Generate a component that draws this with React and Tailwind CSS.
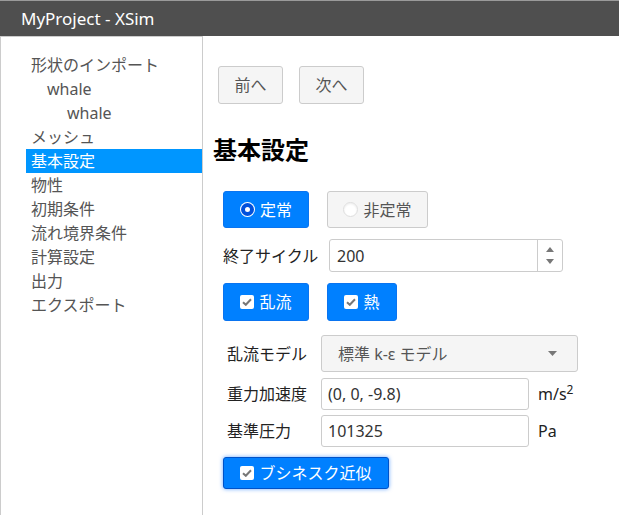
import React from "react";

const FONT = { fontFamily: '"Noto Sans", "Noto Sans CJK JP", sans-serif' };

function CheckIcon() {
  return (
    <span className="flex h-[14px] w-[14px] items-center justify-center rounded-[2px] bg-white">
      <svg width="10" height="8" viewBox="0 0 10 8">
        <path d="M1 4.2 L3.8 6.8 L9 1.2" fill="none" stroke="#777" strokeWidth="2" />
      </svg>
    </span>
  );
}

function RadioOn() {
  return (
    <span className="flex h-[15px] w-[15px] items-center justify-center rounded-full bg-white">
      <span className="h-[13px] w-[13px] rounded-full border-[4px] border-[#0050dc] bg-white" />
    </span>
  );
}

function RadioOff() {
  return <span className="h-[15px] w-[15px] rounded-full border border-[#dedede] bg-white shadow-[inset_0_1px_2px_rgba(0,0,0,0.08)]" />;
}

const sideItems = [
  { t: "形状のインポート", pl: "pl-[5px]" },
  { t: "whale", pl: "pl-[21px]" },
  { t: "whale", pl: "pl-[41px]" },
  { t: "メッシュ", pl: "pl-[5px]" },
  { t: "基本設定", pl: "pl-[5px]", active: true },
  { t: "物性", pl: "pl-[5px]" },
  { t: "初期条件", pl: "pl-[5px]" },
  { t: "流れ境界条件", pl: "pl-[5px]" },
  { t: "計算設定", pl: "pl-[5px]" },
  { t: "出力", pl: "pl-[5px]" },
  { t: "エクスポート", pl: "pl-[5px]" },
];

export default function App() {
  return (
    <div className="flex h-[515px] w-[619px] flex-col overflow-hidden bg-white" style={FONT}>
      <div className="flex h-9 shrink-0 items-center border-t border-[#9a9a9a] bg-[#4f4f4f] pl-[21px] text-[17px] text-white">
        MyProject - XSim
      </div>
      <div className="flex flex-1">
        <div className="w-[203px] shrink-0 border-x border-t border-[#cccccc] pt-[16px]">
          <ul className="ml-[25px]">
            {sideItems.map((it, i) => (
              <li
                key={i}
                className={`h-6 text-[16px] leading-6 ${it.pl} ${
                  it.active ? "bg-[#0096ff] text-white" : "text-[#555555]"
                }`}
              >
                {it.t}
              </li>
            ))}
          </ul>
        </div>
        <div className="flex flex-1 flex-col">
          <div className="ml-[15px] mt-[30px] flex gap-4">
            <button className="h-[38px] w-[65px] rounded-[3px] border border-[#cccccc] bg-[#f5f5f5] text-[16px] text-[#555555]">
              前へ
            </button>
            <button className="h-[38px] w-[65px] rounded-[3px] border border-[#cccccc] bg-[#f5f5f5] text-[16px] text-[#555555]">
              次へ
            </button>
          </div>
          <h2 className="ml-[10px] mt-[30px] h-8 text-[24px] font-bold leading-8 text-black">基本設定</h2>

          <div className="ml-[20px] mt-[25px] flex gap-[18px]">
            <button className="flex h-[37px] w-[86px] items-center justify-center gap-[5px] rounded-[3px] border border-[#0a74f0] bg-[#0080ff] text-[16px] text-white">
              <RadioOn />
              定常
            </button>
            <button className="flex h-[37px] w-[101px] items-center justify-center gap-[5px] rounded-[3px] border border-[#cccccc] bg-[#f5f5f5] text-[16px] text-[#555555]">
              <RadioOff />
              非定常
            </button>
          </div>

          <div className="ml-[20px] mt-[11px] flex items-center">
            <span className="w-[106px] text-[16px] text-[#222222]">終了サイクル</span>
            <div className="flex h-[33px] w-[234px] rounded-[3px] border border-[#cccccc]">
              <span className="flex flex-1 items-center pl-[7px] text-[16px] text-[#333333]">200</span>
              <div className="flex w-[25px] flex-col items-center justify-center gap-[7px] border-l border-[#cccccc]">
                <svg width="8" height="5" viewBox="0 0 8 5"><path d="M0 5 L4 0 L8 5 Z" fill="#777" /></svg>
                <svg width="8" height="5" viewBox="0 0 8 5"><path d="M0 0 L4 5 L8 0 Z" fill="#777" /></svg>
              </div>
            </div>
          </div>

          <div className="ml-[20px] mt-[11px] flex gap-[18px]">
            <button className="flex h-[38px] w-[86px] items-center justify-center gap-[5px] rounded-[3px] border border-[#0a74f0] bg-[#0080ff] text-[16px] text-white">
              <CheckIcon />
              乱流
            </button>
            <button className="flex h-[38px] w-[70px] items-center justify-center gap-[5px] rounded-[3px] border border-[#0a74f0] bg-[#0080ff] text-[16px] text-white">
              <CheckIcon />
              熱
            </button>
          </div>

          <div className="ml-[24px] mt-[14px] flex items-center">
            <span className="w-[94px] text-[16px] text-[#222222]">乱流モデル</span>
            <div className="flex h-[37px] w-[257px] items-center justify-between rounded-[3px] border border-[#cccccc] bg-[#f5f5f5] pl-[16px] pr-[20px] text-[16px] text-[#555555]">
              <span>標準 k-ε モデル</span>
              <svg width="9" height="5" viewBox="0 0 9 5"><path d="M0 0 L4.5 5 L9 0 Z" fill="#777" /></svg>
            </div>
          </div>

          <div className="ml-[24px] mt-[6px] flex items-center">
            <span className="w-[94px] text-[16px] text-[#222222]">重力加速度</span>
            <div className="flex h-[32px] w-[208px] items-center rounded-[3px] border border-[#cccccc] pl-[6px] text-[16px] text-[#333333]">
              (0, 0, -9.8)
            </div>
            <span className="ml-[9px] text-[16px] text-[#222222]">
              m/s<sup className="text-[12px]">2</sup>
            </span>
          </div>

          <div className="ml-[24px] mt-[5px] flex items-center">
            <span className="w-[94px] text-[16px] text-[#222222]">基準圧力</span>
            <div className="flex h-[32px] w-[208px] items-center rounded-[3px] border border-[#cccccc] pl-[6px] text-[16px] text-[#333333]">
              101325
            </div>
            <span className="ml-[9px] text-[16px] text-[#222222]">Pa</span>
          </div>

          <div className="ml-[20px] mt-[10px] flex">
            <button className="flex h-[32px] w-[166px] items-center justify-center gap-[5px] rounded-[3px] border border-[#0052c8] bg-[#0080ff] text-[16px] text-white shadow-[0_0_4px_rgba(0,110,255,0.6)]">
              <CheckIcon />
              ブシネスク近似
            </button>
          </div>
        </div>
      </div>
    </div>
  );
}
